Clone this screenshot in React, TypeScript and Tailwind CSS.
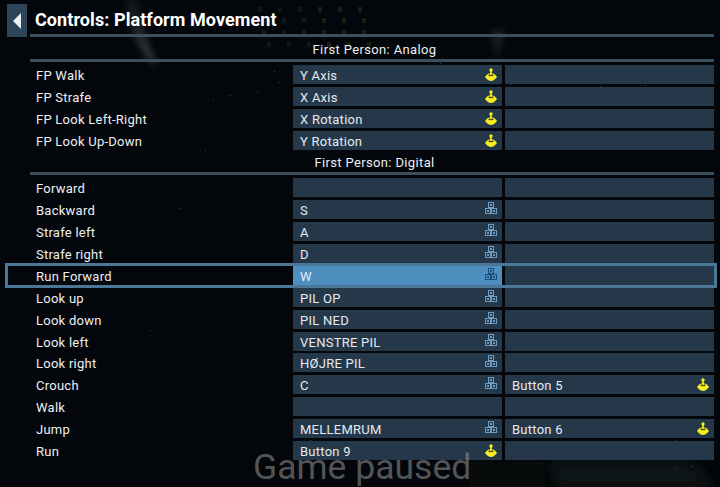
const FONT = "font-['Roboto',sans-serif]";

type Bind = { text?: string; icon?: 'pad' | 'key' };
type Row = { label: string; a?: Bind; b?: Bind; active?: boolean; tight?: boolean };

const analog: Row[] = [
  { label: 'FP Walk', a: { text: 'Y Axis', icon: 'pad' } },
  { label: 'FP Strafe', a: { text: 'X Axis', icon: 'pad' } },
  { label: 'FP Look Left-Right', a: { text: 'X Rotation', icon: 'pad' } },
  { label: 'FP Look Up-Down', a: { text: 'Y Rotation', icon: 'pad' } },
];

const digital: Row[] = [
  { label: 'Forward' },
  { label: 'Backward', a: { text: 'S', icon: 'key' } },
  { label: 'Strafe left', a: { text: 'A', icon: 'key' } },
  { label: 'Strafe right', a: { text: 'D', icon: 'key' } },
  { label: 'Run Forward', a: { text: 'W', icon: 'key' }, active: true },
  { label: 'Look up', a: { text: 'PIL OP', icon: 'key' } },
  { label: 'Look down', a: { text: 'PIL NED', icon: 'key' } },
  { label: 'Look left', a: { text: 'VENSTRE PIL', icon: 'key' } },
  { label: 'Look right', a: { text: 'HØJRE PIL', icon: 'key' }, tight: true },
  { label: 'Crouch', a: { text: 'C', icon: 'key' }, b: { text: 'Button 5', icon: 'pad' } },
  { label: 'Walk' },
  { label: 'Jump', a: { text: 'MELLEMRUM', icon: 'key' }, b: { text: 'Button 6', icon: 'pad' } },
  { label: 'Run', a: { text: 'Button 9', icon: 'pad' } },
];

const stars = [
  [274, 71], [279, 82], [257, 91], [230, 95], [213, 99], [180, 208], [205, 150], [150, 330],
  [440, 63], [510, 84], [600, 86], [645, 85], [676, 440], [692, 466], [676, 466], [310, 440],
];

function PadIcon() {
  return (
    <svg width="12" height="13" viewBox="0 0 12 13" className="shrink-0 -mt-[1px]">
      <rect x="5.2" y="2" width="1.6" height="5" fill="#f7ee22" />
      <circle cx="6" cy="2" r="1.7" fill="#f7ee22" />
      <path d="M0 9 Q1.6 6.2 4 5.6 H8 Q10.4 6.2 12 9 Q9 13 6 13 Q3 13 0 9 Z" fill="#f7ee22" />
      <ellipse cx="6" cy="7.2" rx="2.6" ry="1" fill="#3d3c10" />
      <rect x="5.3" y="5" width="1.4" height="2.2" fill="#f7ee22" />
    </svg>
  );
}

function KeyIcon({ active }: { active?: boolean }) {
  const c = active ? '#1f4f78' : '#6a9cc4';
  return (
    <svg width="12" height="12" viewBox="0 0 12 12" className="shrink-0 -mt-[3px]" fill="none" stroke={c}>
      <rect x="3.5" y=".5" width="5" height="5" />
      <rect x=".5" y="6.5" width="5" height="5" />
      <rect x="6.5" y="6.5" width="5" height="5" />
      <rect x="5" y="2" width="2" height="2" fill={c} stroke="none" />
      <rect x="2" y="8" width="2" height="2" fill={c} stroke="none" />
      <rect x="8" y="8" width="2" height="2" fill={c} stroke="none" />
    </svg>
  );
}

function Cell({ bind, active }: { bind?: Bind; active?: boolean }) {
  return (
    <div className={`h-[19px] flex items-center justify-between pl-[7px] pr-[5px] ${active ? 'bg-[#4e8fc0]' : 'bg-[#24384a]'}`}>
      <span className="pt-[1px] text-[13px] tracking-[0.25px] text-[#e6eaee] leading-none">{bind?.text}</span>
      {bind?.icon === 'pad' && <PadIcon />}
      {bind?.icon === 'key' && <KeyIcon active={active} />}
    </div>
  );
}

function BindRow({ row }: { row: Row }) {
  if (row.active) {
    return (
      <div className="-ml-[25px] -mr-[3px] -my-[3px] h-[25px] border-[3px] border-[#4a7896] grid grid-cols-[282px_209px_209px] gap-x-[3px] items-center">
        <span className="pl-[28px] pt-[1px] text-[13px] tracking-[0.25px] text-[#eef0f2] leading-none">{row.label}</span>
        <Cell bind={row.a} active />
        <div className="h-[19px] bg-[#24384a]" />
      </div>
    );
  }
  return (
    <div className={`grid grid-cols-[260px_209px_209px] gap-x-[3px] items-center h-[19px] ${row.tight ? '-mt-[1px]' : ''}`}>
      <span className="pl-[6px] pt-[1px] text-[13px] tracking-[0.25px] text-[#eef0f2] leading-none">{row.label}</span>
      <Cell bind={row.a} />
      <Cell bind={row.b} />
    </div>
  );
}

function SectionHead({ title }: { title: string }) {
  return (
    <div>
      <div className="h-[22px] pt-[3px] pl-[5px] flex items-center justify-center text-[13px] tracking-[0.36px] text-[#eef0f2] leading-none">{title}</div>
      <div className="h-[3px] bg-[#3c4f5f]" />
    </div>
  );
}

export default function App() {
  return (
    <div className={`relative w-[720px] h-[487px] overflow-hidden bg-[#020304] ${FONT}`}>
      {/* backdrop: dim scene behind the menu */}
      <svg className="absolute inset-0" width="720" height="487" viewBox="0 0 720 487">
        <defs>
          <linearGradient id="streak" x1="0" y1="0" x2="0" y2="1">
            <stop offset="0" stopColor="#5a6a70" stopOpacity=".16" />
            <stop offset=".8" stopColor="#6a7a80" stopOpacity=".4" />
            <stop offset="1" stopColor="#5a6a70" stopOpacity="0" />
          </linearGradient>
          <filter id="blur"><feGaussianBlur stdDeviation="3" /></filter>
          <filter id="blur2"><feGaussianBlur stdDeviation="8" /></filter>
        </defs>
        <rect width="720" height="487" fill="#03060a" />
        <path d="M126 0 C128 30 140 55 160 72 C150 45 140 25 138 0 Z" fill="url(#streak)" filter="url(#blur)" />
        <path d="M490 30 L505 30 L498 60 Z" fill="#4a5a60" opacity=".3" filter="url(#blur)" />
        <path d="M545 462 H690 L720 487 H560 Z" fill="#0e1719" filter="url(#blur2)" />
        <path d="M470 462 H545 V487 H470 Z" fill="#070b0c" />
        {stars.map(([x, y]) => (
          <rect key={`${x}-${y}`} x={x} y={y} width="1" height="1" fill="#5d6a72" opacity=".6" />
        ))}
        {[258, 262, 262, 267].map((x0, r) =>
          [0, 1, 2, 3, 4, 5].map((c) => (
            <rect
              key={`${r}-${c}`}
              x={x0 + c * 20}
              y={[7, 18, 30, 42][r]}
              width="4"
              height="5"
              fill={c > 2 ? '#4a4a1c' : '#1c4030'}
              opacity=".35"
            />
          )),
        )}
      </svg>

      <div className="relative flex pl-[7px] pr-[6px]">
        <div className="w-[20px] h-[33px] mt-[4px] bg-[#2c4558] flex items-center justify-center shrink-0">
          <svg width="9" height="16" viewBox="0 0 9 16"><path d="M8 0 V16 L0 8 Z" fill="#eef0f2" /></svg>
        </div>
        <div className="ml-[3px] flex-1">
          <div className="h-[34px] flex items-center pl-[5px] pt-[5px] text-[18px] tracking-[0.08px] font-bold text-white leading-none">
            Controls: Platform Movement
          </div>
          <div className="h-[3px] bg-[#3c4f5f]" />
          <SectionHead title="First Person: Analog" />
          <div className="mt-[3px] flex flex-col gap-[3px]">
            {analog.map((r) => <BindRow key={r.label} row={r} />)}
          </div>
          <SectionHead title="First Person: Digital" />
          <div className="mt-[3px] flex flex-col gap-[3px]">
            {digital.map((r) => <BindRow key={r.label} row={r} />)}
          </div>
        </div>
      </div>

      <div className="absolute left-[253px] top-[447px] text-[35.5px] leading-[40px] text-[#8a8a8a]/60">Game paused</div>
    </div>
  );
}
